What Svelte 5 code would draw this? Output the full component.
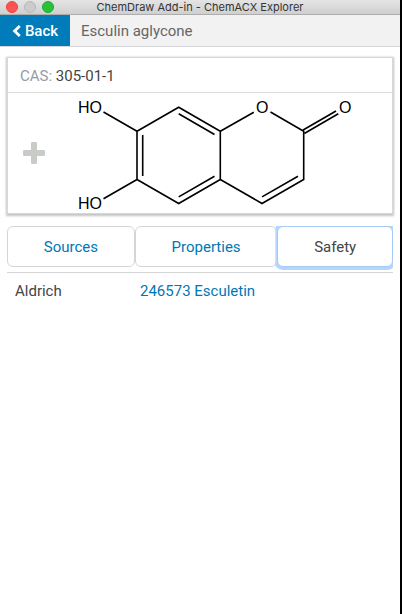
<script>
  const product = { name: 'Esculin aglycone', cas: '305-01-1' };
  const tabs = ['Sources', 'Properties', 'Safety'];
  const rows = [{ vendor: 'Aldrich', item: '246573 Esculetin' }];
  let active = $state('Safety');
</script>

<div class="window">
  <header class="titlebar">
    <div class="lights">
      <button class="close" aria-label="Close"></button>
      <button class="minimize" aria-label="Minimize"></button>
      <button class="maximize" aria-label="Maximize"></button>
    </div>
    <span class="title">ChemDraw Add-in - ChemACX Explorer</span>
  </header>

  <nav class="navbar">
    <button class="back">
      <svg width="9" height="12" viewBox="0 0 9 12" aria-hidden="true">
        <path d="M7.800 1L2.600 6L7.800 11" fill="none" stroke="#fff" stroke-width="2.800" />
      </svg>
      Back
    </button>
    <span class="name">{product.name}</span>
  </nav>

  <main>
    <section class="card">
      <div class="cas"><span>CAS:</span> {product.cas}</div>
      <div class="structure">
        <button class="add" aria-label="Add">
          <svg width="22" height="22" viewBox="0 0 22 22" aria-hidden="true">
            <path
              d="M9.300 0h3.400q1.300 0 1.300 1.300V8H20.700Q22 8 22 9.300v3.400q0 1.300-1.300 1.300H14V20.700Q14 22 12.700 22H9.300Q8 22 8 20.700V14H1.300Q0 14 0 12.700V9.300Q0 8 1.300 8H8V1.300Q8 0 9.300 0Z"
              fill="#c9cbc7"
            />
          </svg>
        </button>
        <svg class="molecule" width="290" height="120" viewBox="70 93 290 120" role="img" aria-label="Esculin aglycone structure">
          <g fill="none" stroke="#000" stroke-width="1.6">
            <path d="M137 131.300L178.700 107.200L220.300 131.300V179.500L178.700 203.500L137 179.500Z" />
            <path d="M142.700 135V176M178.700 113.700L214.500 134.500M178.700 196.900L214.500 176.200" />
            <path d="M103.500 112L137 131.300M103.500 198.800L137 179.500" />
            <path d="M220.300 131.300L253.800 112.200M270.500 112L303.700 131.300V179.500L262 203.500L220.300 179.500" />
            <path d="M262 196.900L298 176.200M302.700 130.300L336 111M304.300 133.500L338.300 113.800" />
          </g>
          <g class="atoms">
            <text x="78" y="113">HO</text>
            <text x="78" y="209">HO</text>
            <text x="256" y="113">O</text>
            <text x="339" y="113">O</text>
          </g>
        </svg>
      </div>
    </section>

    <div class="tabs" role="tablist">
      {#each tabs as tab}
        <button role="tab" aria-selected={active === tab} class:active={active === tab} onclick={() => (active = tab)}>{tab}</button>
      {/each}
    </div>

    <table>
      <tbody>
        {#each rows as row}
          <tr>
            <td class="vendor">{row.vendor}</td>
            <td><a href="#item">{row.item}</a></td>
          </tr>
        {/each}
      </tbody>
    </table>
  </main>
</div>

<style>
  .window {
    box-sizing: border-box;
    min-height: 100vh;
    border-right: 2px solid #000;
    background: #fff;
    color: #444;
    font: 15px/20px Roboto, 'Liberation Sans', sans-serif;
  }
  button {
    margin: 0;
    padding: 0;
    border: 0;
    background: none;
    font: inherit;
    cursor: pointer;
  }
  .titlebar {
    display: grid;
    grid-template-columns: 1fr auto 1fr;
    align-items: center;
    height: 14px;
    border-bottom: 1px solid #adadad;
    background: linear-gradient(#e4e4e4, #cfcfcf);
  }
  .lights {
    display: flex;
    gap: 6px;
    padding-left: 6px;
  }
  .lights button {
    box-sizing: border-box;
    width: 12px;
    height: 12px;
    border-radius: 50%;
  }
  .close {
    border: 1px solid #e8443f;
    background: #fc5550;
  }
  .minimize {
    border: 1px solid #b9b9b9;
    background: #cbcbcb;
  }
  .maximize {
    border: 1px solid #1bac2c;
    background: #27c23a;
  }
  .title {
    color: #333;
    font: 11px/14px Inter, sans-serif;
  }
  .navbar {
    display: flex;
    height: 31px;
    border-bottom: 1px solid #d7d7dc;
    background: #f2f2f2;
    line-height: 32px;
  }
  .back {
    display: flex;
    align-items: center;
    justify-content: center;
    gap: 4px;
    width: 70px;
    background: #007cba;
    color: #fff;
    font-weight: 500;
  }
  .name {
    padding-left: 11px;
    color: #666;
  }
  main {
    padding: 10px 7px;
  }
  .card {
    border: 1px solid #d8d8d8;
    box-shadow: 0 1px 2px 1px #c4c4c4;
  }
  .cas {
    padding: 8px 12px 6px;
    border-bottom: 1px solid #dcdcdc;
  }
  .cas span {
    color: #939ca5;
  }
  .structure {
    display: flex;
    align-items: center;
    height: 120px;
  }
  .add {
    box-sizing: border-box;
    flex: none;
    width: 62px;
    padding-left: 15px;
    text-align: left;
  }
  .add svg,
  .molecule {
    display: block;
  }
  .atoms {
    font: 16px 'Liberation Sans', Arial, sans-serif;
  }
  .tabs {
    display: flex;
    margin-top: 12px;
  }
  .tabs button {
    flex: 1 1 auto;
    height: 41px;
    border: 1px solid #d5d5d5;
    border-radius: 6px;
    background: #fff;
    color: #0077b5;
  }
  .tabs .active {
    border-color: #a5cbf5;
    color: #444;
    box-shadow: 0 0 0 3px #b5d6fc;
    clip-path: inset(0 0 -3px -2px);
  }
  table {
    width: 100%;
    margin-top: 5px;
    border-top: 1px solid #d5d5d5;
    border-collapse: collapse;
  }
  td {
    padding: 8px;
  }
  .vendor {
    width: 109px;
  }
  a {
    color: #0077b5;
    text-decoration: none;
  }
</style>
